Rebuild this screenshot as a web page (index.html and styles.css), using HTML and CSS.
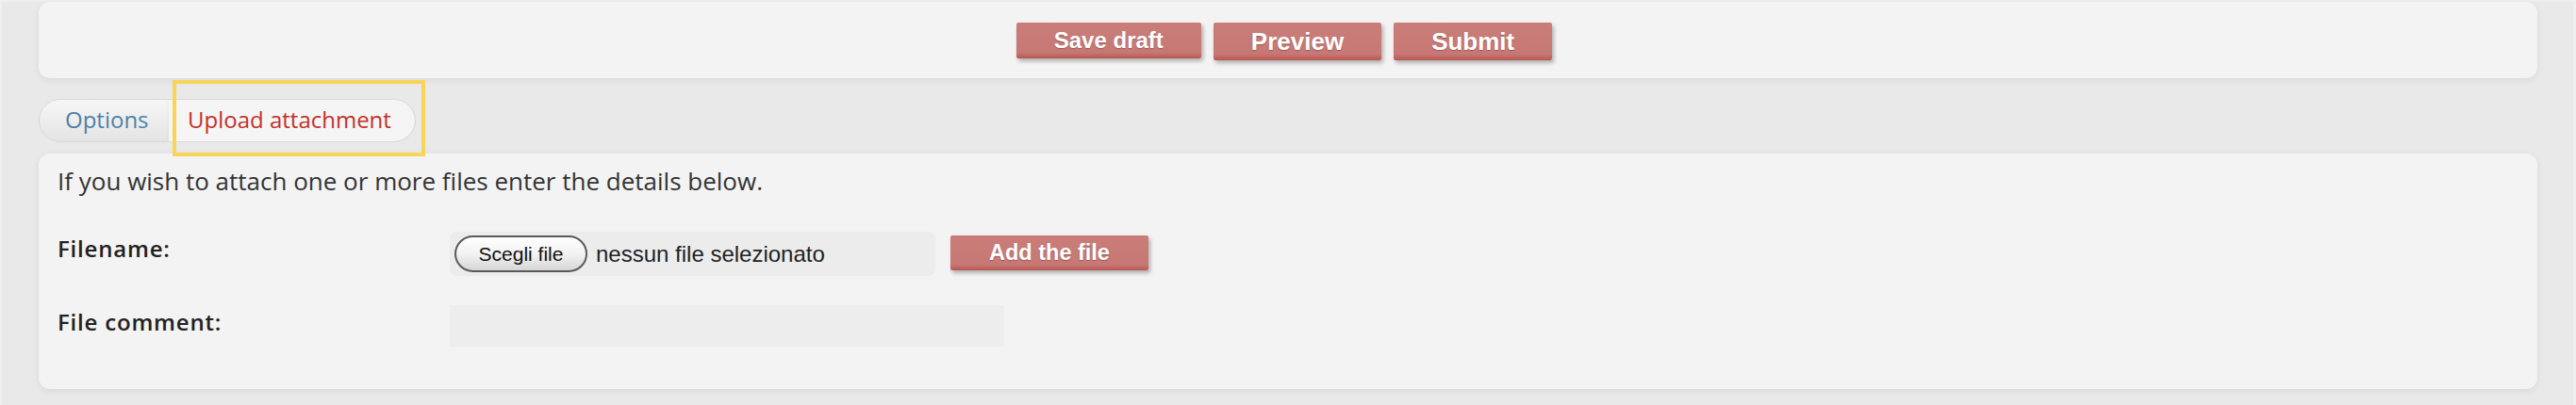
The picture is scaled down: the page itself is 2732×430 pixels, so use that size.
FILE: index.html
```html
<!DOCTYPE html>
<html lang="en">
<head>
<meta charset="utf-8">
<title>Post attachment</title>
<link rel="stylesheet" href="styles.css">
</head>
<body>
<div class="page">
  <div class="panel actions">
    <button class="btn btn-draft">Save draft</button>
    <button class="btn btn-big">Preview</button>
    <button class="btn btn-big">Submit</button>
  </div>

  <div class="tabs-wrap">
    <div class="tabs">
      <span class="tab tab-options">Options</span>
      <span class="tab tab-active">Upload attachment</span>
    </div>
    <div class="highlight"></div>
  </div>

  <div class="panel attach">
    <p class="intro">If you wish to attach one or more files enter the details below.</p>
    <div class="row">
      <span class="label">Filename:</span>
      <div class="file-field">
        <span class="file-btn">Scegli file</span>
        <span class="file-name">nessun file selezionato</span>
      </div>
      <button class="btn btn-add">Add the file</button>
    </div>
    <div class="row row-comment">
      <span class="label">File comment:</span>
      <div class="comment-field"></div>
    </div>
  </div>
</div>
</body>
</html>
```

FILE: styles.css
```css
html, body {
  margin: 0;
  padding: 0;
  background: #efefef;
}

.page {
  margin: 2px 3px 0 2px;
  height: 428px;
  box-sizing: border-box;
  background: #e9e9e9;
  padding: 0 38px 0 39px;
  font-family: "Open Sans", "Liberation Sans", sans-serif;
  color: #333;
}

.panel {
  background: #f3f3f3;
  border-radius: 12px;
  box-shadow: 0 2px 9px rgba(0, 0, 0, 0.07);
}

.actions {
  display: flex;
  justify-content: center;
  align-items: flex-start;
  gap: 13px;
  height: 81px;
  box-sizing: border-box;
  padding-top: 22px;
  padding-right: 8px;
}

.btn {
  font-family: "Liberation Sans", Arial, sans-serif;
  font-weight: bold;
  color: #fff;
  border: none;
  border-radius: 2px;
  padding: 0 40px;
  background: linear-gradient(to bottom, #c97d79 0%, #c77874 84%, #b8564f 100%);
  box-shadow: 2px 3px 4px rgba(0, 0, 0, 0.28);
  text-shadow: 0 1px 1px rgba(0, 0, 0, 0.25);
  cursor: pointer;
}

.btn-draft {
  font-size: 24px;
  height: 38px;
}

.btn-big {
  font-size: 26px;
  height: 40px;
}

.btn-add {
  font-size: 23.5px;
  height: 37px;
  margin-top: 4px;
  margin-left: 16px;
  padding: 0 41px;
}

.tabs-wrap {
  position: relative;
  width: 400px;
  margin-top: 22px;
}

.tabs {
  display: flex;
  height: 46px;
  box-sizing: border-box;
  border: 1px solid #d9d9d9;
  border-radius: 23px;
  overflow: hidden;
  background: linear-gradient(to bottom, #f6f6f6 0%, #ebebeb 60%, #e4e4e4 100%);
}

.tab {
  display: flex;
  align-items: center;
  font-size: 24px;
  padding-bottom: 4px;
  box-sizing: border-box;
}

.tab-options {
  width: 137px;
  padding-left: 27px;
  color: #4c82a9;
}

.tab-active {
  flex: 1;
  padding-left: 20px;
  color: #c4302b;
  background: #f5f5f5;
  border-radius: 0 23px 23px 0;
  box-shadow: 1px 0 4px rgba(0, 0, 0, 0.12);
}

.highlight {
  position: absolute;
  left: 142px;
  top: -20px;
  width: 268px;
  height: 81px;
  box-sizing: border-box;
  border: 4px solid #f8d458;
}

.attach {
  margin-top: 12px;
  height: 250px;
  box-sizing: border-box;
  padding: 11px 20px 0 20px;
}

.intro {
  margin: 0;
  font-size: 26px;
  line-height: 36px;
  color: #333;
}

.row {
  display: flex;
  align-items: flex-start;
  margin-top: 36px;
}

.row-comment {
  margin-top: 31px;
}

.label {
  width: 416px;
  flex: none;
  font-size: 24px;
  font-weight: 600;
  letter-spacing: 0.8px;
  line-height: 33px;
  padding-top: 1px;
  color: #222;
}

.file-field {
  display: flex;
  align-items: center;
  width: 515px;
  height: 47px;
  box-sizing: border-box;
  padding: 0 5px;
  background: #ececec;
  border-radius: 8px;
}

.file-btn {
  display: flex;
  align-items: center;
  justify-content: center;
  width: 141px;
  height: 39px;
  box-sizing: border-box;
  border: 2px solid #5a5a5a;
  border-radius: 20px;
  background: linear-gradient(to bottom, #ffffff 0%, #f2f2f2 50%, #d6d6d6 100%);
  font-family: "Liberation Sans", Arial, sans-serif;
  font-size: 21px;
  color: #111;
}

.file-name {
  margin-left: 9px;
  font-family: "Liberation Sans", Arial, sans-serif;
  font-size: 24px;
  color: #222;
}

.comment-field {
  width: 588px;
  height: 44px;
  background: #ededed;
}
```
